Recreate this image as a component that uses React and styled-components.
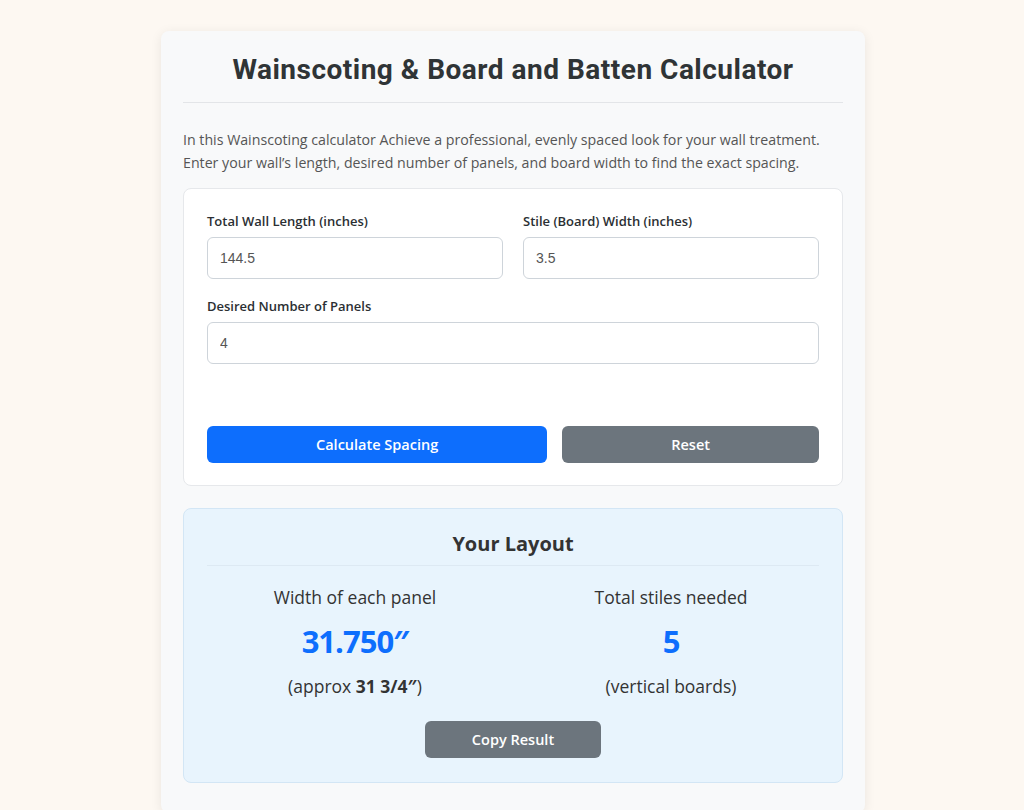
import styled, { createGlobalStyle } from 'styled-components';

// ------------------------------
// Global
// ------------------------------
const GlobalStyle = createGlobalStyle`
  * { box-sizing: border-box; }
  body {
    margin: 0;
    background: #fdf8f2;
    font-family: "Open Sans", "Noto Sans", sans-serif;
    color: #333;
  }
`;

// ------------------------------
// Styled Components
// ------------------------------
const Page = styled.div`
  display: flex;
  justify-content: center;
  padding: 31px 0 0 2px;
  min-height: 810px;
`;

const Card = styled.div`
  width: 704px;
  background: #f8f9fa;
  border-radius: 8px;
  box-shadow: 0 2px 12px rgba(0, 0, 0, 0.08);
  padding: 22px 22px 30px;
`;

const Title = styled.h1`
  margin: 0;
  font-family: "Roboto", "Inter", sans-serif;
  font-weight: 700;
  font-size: 28px;
  letter-spacing: 0.5px;
  line-height: 34px;
  color: #2f3436;
  text-align: center;
  padding-bottom: 15px;
  border-bottom: 1px solid #e3e5e8;
`;

const Intro = styled.p`
  margin: 25px 0 14px;
  font-size: 14.2px;
  line-height: 23px;
  color: #555;
`;

const FormBox = styled.div`
  background: #fff;
  border: 1px solid #e6e8eb;
  border-radius: 8px;
  padding: 23px 23px 22px;
`;

const FieldGrid = styled.div`
  display: grid;
  grid-template-columns: 1fr 1fr;
  gap: 18px 20px;
`;

const Field = styled.div`
  display: flex;
  flex-direction: column;
  grid-column: ${(p) => (p.$wide ? '1 / -1' : 'auto')};
`;

const Label = styled.label`
  font-size: 13px;
  font-weight: 560;
  color: #2b2f33;
  margin-bottom: 7px;
  line-height: 18px;
`;

const Input = styled.input`
  height: 42px;
  border: 1px solid #ced4da;
  border-radius: 6px;
  padding: 0 12px;
  font-family: "Liberation Sans", Arial, sans-serif;
  font-size: 14px;
  color: #555;
  background: #fff;
`;

const ButtonRow = styled.div`
  display: flex;
  gap: 15px;
  margin-top: 62px;
`;

const Button = styled.button`
  flex: 1 1 auto;
  height: 37px;
  border: none;
  border-radius: 6px;
  padding: 0 24px;
  font-family: "Open Sans", sans-serif;
  font-size: 14.5px;
  font-weight: 600;
  color: #fff;
  background: ${(p) => (p.$primary ? '#0d6efd' : '#6c757d')};
  cursor: pointer;
`;

const Results = styled.div`
  margin-top: 22px;
  background: #e8f4fd;
  border: 1px solid #d3e6f5;
  border-radius: 8px;
  padding: 21px 23px 24px;
  display: flex;
  flex-direction: column;
  align-items: center;
`;

const ResultsTitle = styled.h2`
  margin: 0;
  width: 100%;
  text-align: center;
  font-size: 20px;
  font-weight: 700;
  line-height: 28px;
  color: #333;
  padding-bottom: 7px;
  border-bottom: 1px solid #dde9f3;
`;

const ResultGrid = styled.div`
  width: 100%;
  display: grid;
  grid-template-columns: 1fr 1fr;
  gap: 20px;
  margin-top: 19px;
`;

const ResultItem = styled.div`
  display: flex;
  flex-direction: column;
  align-items: center;
`;

const ResultLabel = styled.div`
  font-size: 17.5px;
  line-height: 24px;
  color: #333;
`;

const ResultValue = styled.div`
  font-size: 31px;
  font-weight: 700;
  letter-spacing: -1px;
  line-height: 44px;
  color: #0d6efd;
  margin: 10px 0 11px;
`;

const ResultNote = styled.div`
  font-size: 17.5px;
  line-height: 24px;
  color: #333;

  strong {
    font-weight: 700;
  }
`;

const CopyButton = styled(Button)`
  flex: none;
  width: 176px;
  margin-top: 23px;
`;

// ------------------------------
// Component
// ------------------------------
function App() {
  return (
    <>
      <GlobalStyle />
      <Page>
        <Card>
          <Title>Wainscoting &amp; Board and Batten Calculator</Title>
          <Intro>
            In this Wainscoting calculator Achieve a professional, evenly spaced
            look for your wall treatment. Enter your wall’s length, desired
            number of panels, and board width to find the exact spacing.
          </Intro>

          <FormBox>
            <FieldGrid>
              <Field>
                <Label>Total Wall Length (inches)</Label>
                <Input defaultValue="144.5" />
              </Field>
              <Field>
                <Label>Stile (Board) Width (inches)</Label>
                <Input defaultValue="3.5" />
              </Field>
              <Field $wide>
                <Label>Desired Number of Panels</Label>
                <Input defaultValue="4" />
              </Field>
            </FieldGrid>
            <ButtonRow>
              <Button $primary>Calculate Spacing</Button>
              <Button>Reset</Button>
            </ButtonRow>
          </FormBox>

          <Results>
            <ResultsTitle>Your Layout</ResultsTitle>
            <ResultGrid>
              <ResultItem>
                <ResultLabel>Width of each panel</ResultLabel>
                <ResultValue>31.750″</ResultValue>
                <ResultNote>
                  (approx <strong>31 3/4″</strong>)
                </ResultNote>
              </ResultItem>
              <ResultItem>
                <ResultLabel>Total stiles needed</ResultLabel>
                <ResultValue>5</ResultValue>
                <ResultNote>(vertical boards)</ResultNote>
              </ResultItem>
            </ResultGrid>
            <CopyButton>Copy Result</CopyButton>
          </Results>
        </Card>
      </Page>
    </>
  );
}

export default App;
